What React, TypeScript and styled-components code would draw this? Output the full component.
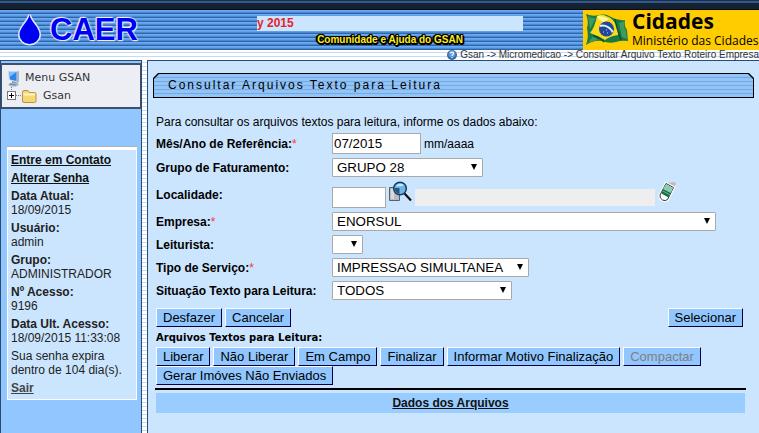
import React from "react";
import styled, { createGlobalStyle, css } from "styled-components";

const c = {
  panel: "#cbe5fe",
  side: "#91c6fe",
  line: "#2c4a70",
  ink: "#000",
};

const GlobalStyle = createGlobalStyle`
  * { box-sizing: border-box; }
  body {
    margin: 0;
    overflow-x: hidden;
    font-family: "Liberation Sans", Arial, sans-serif;
    font-size: 12px;
    line-height: 14px;
    color: ${c.ink};
    background: #fff;
  }
  button, input, select { font-family: inherit; margin: 0; }
`;

const pinstripe = css`
  background: repeating-linear-gradient(#fff 0 2px, #c3dcf5 2px 3px, #fff 3px 4px);
`;

const Page = styled.div`
  display: flex;
  flex-direction: column;
  min-height: 100vh;
`;

const TopStrip = styled.div`
  height: 10px;
  background: linear-gradient(#17304f 0 1px, #36598c 1px 3px, #142131 3px 9px, #05080d 9px);
`;

const Banner = styled.header`
  display: flex;
  height: 40px;
  background: repeating-linear-gradient(#6aabf6 0 1px, #5fa0ec 1px 2px, #4a87cf 2px 3px, #3263a3 3px 4px);
`;

const Logo = styled.div`
  display: flex;
  align-items: center;
  gap: 8px;
  flex: 0 0 257px;
  padding-left: 18px;
  font-size: 31px;
  line-height: 40px;
  font-weight: bold;
  color: #0000f5;
  text-shadow: 0 0 2px #fff, 0 0 2px #fff, 1px 1px 1px #e6edff, -1px -1px 1px #e6edff;
`;

const BannerCenter = styled.div`
  display: flex;
  flex-direction: column;
  align-items: center;
  flex: 1;
  min-width: 0;
  padding: 6px 60px 0 0;
`;

const Ticker = styled.div`
  align-self: stretch;
  height: 15px;
  overflow: hidden;
  white-space: nowrap;
  background: ${c.panel};
  color: #e8202c;
  font-size: 12px;
  line-height: 15px;
  font-weight: bold;
`;

const Community = styled.a`
  padding-top: 2px;
  font-size: 10px;
  font-weight: bold;
  color: #ffee1c;
  text-decoration: none;
  white-space: nowrap;
  text-shadow: 1px 0 #000, -1px 0 #000, 0 1px #000, 0 -1px #000, 1px 1px #000,
    -1px -1px #000, 1px -1px #000, -1px 1px #000, 2px 1px #000, 1px 2px #000, -2px 0 #000, 0 2px #000;
`;

const Ministry = styled.div`
  display: flex;
  align-items: center;
  gap: 4px;
  flex: 0 0 176px;
  padding-left: 2px;
  background: #fc0;
  font-family: "Open Sans", "Noto Sans", sans-serif;
  white-space: nowrap;
`;

const MinistryName = styled.div`
  display: flex;
  flex-direction: column;
  font-size: 12px;
  line-height: 17px;
  strong { font-size: 21px; line-height: 21px; font-weight: 700; }
`;

const Crumbs = styled.nav`
  ${pinstripe}
  display: flex;
  justify-content: flex-end;
  align-items: center;
  gap: 3px;
  height: 10px;
  font-size: 10px;
  line-height: 10px;
  color: #333;
  white-space: nowrap;
`;

const Body = styled.div`
  ${pinstripe}
  display: flex;
  flex: 1;
`;

const Sidebar = styled.aside`
  flex: 0 0 142px;
  margin-right: 5px;
  padding-top: 2px;
  border: 1px solid ${c.line};
  border-bottom: 0;
  background: ${c.side};
`;

const Menu = styled.div`
  height: 46px;
  padding: 4px 0 0 5px;
  border: 2px solid #3a5173;
  border-left-width: 1px;
  border-right-width: 1px;
  background: #eceef4;
  font-family: "DejaVu Sans", Verdana, sans-serif;
  font-size: 11px;
  color: #333;
`;

const MenuRow = styled.div`
  display: flex;
  align-items: center;
  gap: 5px;
  height: 18px;
`;

const Session = styled.section`
  margin: 38px 4px 0 6px;
  padding: 3px 3px 4px;
  border: 1px solid #fff;
  border-top: 3px solid #fff;
  box-shadow: 0 -1px #a9b3bf;
  background: ${c.panel};
  color: #222;
  display: flex;
  flex-direction: column;
  gap: 4px;
  white-space: nowrap;
`;

const SideLink = styled.a<{ $muted?: boolean }>`
  font-weight: bold;
  color: ${(p) => (p.$muted ? "#444" : "#111")};
`;

const Main = styled.main`
  flex: 1;
  min-width: 0;
  padding: 12px 5px 0;
  border: solid ${c.line};
  border-width: 1px 0 0 1px;
  background: ${c.panel};
`;

const bevel = css`
  clip-path: polygon(5px 0, calc(100% - 5px) 0, 100% 5px, 100% 100%, 0 100%, 0 5px);
`;

const TitleFrame = styled.div`
  ${bevel}
  padding: 1px;
  background: #000;
`;

const Title = styled.h1`
  ${bevel}
  margin: 0;
  padding-left: 14px;
  background: repeating-linear-gradient(#91c4f8 0 3px, #79a9dc 3px 4px);
  font-size: 12px;
  line-height: 23px;
  font-weight: normal;
  letter-spacing: 2px;
`;

const Content = styled.form`
  padding: 17px 8px 0 3px;
`;

const Intro = styled.p`
  margin: 0 0 2px;
`;

const Row = styled.div<{ $h?: number }>`
  display: grid;
  grid-template-columns: 176px 1fr;
  align-items: center;
  min-height: ${(p) => p.$h ?? 23}px;
`;

const Label = styled.label`
  font-weight: bold;
  white-space: nowrap;
`;

const Required = styled.span`
  color: #f33;
  font-weight: normal;
`;

const Fields = styled.div`
  display: flex;
  align-items: center;
  gap: 3px;
`;

const TextBox = styled.input<{ $w: number }>`
  width: ${(p) => p.$w}px;
  height: 21px;
  padding: 1px;
  border: 1px solid #a9a9a9;
  background: #fff;
  color: #000;
`;

const LookupFields = styled(Fields)`
  align-self: end;
  align-items: flex-end;
  padding-bottom: 2px;
`;

const ReadOnlyBox = styled.input`
  width: 240px;
  height: 17px;
  margin-bottom: 2px;
  padding: 0;
  border: 0;
  background: #eee;
`;

const IconButton = styled.button`
  display: flex;
  padding: 0 0 5px;
  border: 0;
  background: none;
`;

const SelectWrap = styled.div<{ $w: number }>`
  position: relative;
  width: ${(p) => p.$w}px;
  height: 19px;
  &::after {
    content: "";
    position: absolute;
    right: 6px;
    top: 6px;
    border: solid transparent;
    border-width: 6px 3px 0;
    border-top-color: #000;
    pointer-events: none;
  }
`;

const SelectBox = styled.select`
  appearance: none;
  display: block;
  width: 100%;
  height: 19px;
  padding: 0 4px;
  border: 1px solid #a9a9a9;
  border-radius: 1px;
  background: #fff;
  color: #000;
`;

const Actions = styled.div`
  display: flex;
  justify-content: space-between;
  padding: 6px 3px 4px 0;
`;

const ButtonRow = styled.div`
  display: flex;
  flex-wrap: wrap;
  column-gap: 3px;
`;

const Button = styled.button`
  height: 19px;
  padding: 0 6px;
  border: 1px solid;
  border-color: #fff #000040 #000040 #fff;
  background: ${c.side};
  color: #000;
  font-size: 13px;
  line-height: 15px;
  white-space: nowrap;
  &:disabled { color: #808080; }
`;

const Caption = styled.h2`
  margin: 0 0 3px;
  font-family: "DejaVu Sans", Verdana, sans-serif;
  font-size: 10px;
  line-height: 13px;
  font-weight: bold;
`;

const Results = styled.div`
  margin: 3px 0 0 -1px;
  padding: 3px 1px 0;
  border-top: 2px solid #000;
`;

const ResultsHead = styled.div`
  background: #99ccff;
  line-height: 20px;
  text-align: center;
  font-weight: bold;
  a { color: #111; }
`;

function Drop() {
  return (
    <svg width="24" height="36" viewBox="0 0 24 36" aria-hidden="true">
      <path d="M11.500 2.500C11 9 1.500 15 1.500 22.500a10 9.500 0 0 0 20 0C21.500 15 12 9 11.500 2.500Z" fill="#0000f5" stroke="#dfe9ff" strokeWidth="3" paintOrder="stroke" />
    </svg>
  );
}

function Flag() {
  return (
    <svg width="43" height="34" viewBox="0 0 43 34" aria-hidden="true">
      <path d="M1 1Q8 4 14 2Q20 0 26 4Q33 8 40 7Q39 13 42 17L43 28Q37 27 31 29Q24 31 17 28Q9 27 1 32Q4 24 2 15Q4 9 1 1Z" fill="#187a45" />
      <path d="M3 3Q8 6 11 5L5 16ZM34 10L40 8Q38 14 41 18L42 26L37 24ZM3 30L8 23L13 27Z" fill="#3f9a5c" />
      <path d="M12 3Q17 0 21 3Q29 5 33 16Q34 19 33 22Q25 23 20 27Q14 23 5 20Q10 14 12 3Z" fill="#fbd91b" />
      <path d="M12 3Q19 3 24 6L19 9Q14 8 12 3Z" fill="#fff6a0" />
      <ellipse cx="21.500" cy="16" rx="7.500" ry="7.500" fill="#204896" />
      <path d="M15 13Q22 11 28 19" fill="none" stroke="#e6eff9" strokeWidth="2" />
      <path d="M18 19h1m3 1h1m3-1h1m-6-2h1" stroke="#b8d1ff" />
      <path d="M30 6Q31 13 36 27M8 23Q15 24 19 29" fill="none" stroke="#0d4d31" strokeWidth="1.500" />
    </svg>
  );
}

function HelpIcon() {
  return (
    <svg width="10" height="10" viewBox="0 0 10 10" aria-hidden="true">
      <circle cx="5" cy="5" r="5" fill="#3469ad" />
      <circle cx="5" cy="4" r="3.500" fill="#6298d8" />
      <path d="M3.500 3.500Q3.600 2.200 5 2.200Q6.500 2.200 6.500 3.500Q6.500 4.300 5.500 4.900Q5 5.200 5 6M5 7v1" fill="none" stroke="#fff" strokeWidth="1.200" />
    </svg>
  );
}

function ComputerIcon() {
  return (
    <svg width="13" height="17" viewBox="0 0 13 17" aria-hidden="true">
      <path d="M8 2l4-1v11l-3 2Z" fill="#a8b6ca" />
      <path d="M1 1l9 0 0 11-8-2Z" fill="#c3d6ee" />
      <path d="M2 2l7.500 0v9L3 9.500Z" fill="#2d86e3" />
      <path d="M2 2l7.500 0-7 5Z" fill="#76c0ff" />
      <path d="M5 11l4 1v2H5Z" fill="#8294ae" />
      <ellipse cx="6.500" cy="14.500" rx="5" ry="2" fill="#a7b4c8" />
      <path d="M3 14l6 1" stroke="#7386a5" />
    </svg>
  );
}

function TreeFolder() {
  return (
    <svg width="31" height="18" viewBox="0 0 31 18" aria-hidden="true">
      <path d="M4.500 0v4M9 8.500h6" stroke="#777" strokeDasharray="1 1" />
      <rect x="0.500" y="4.500" width="8" height="8" fill="#fff" stroke="#777" />
      <path d="M2 8.500h5M4.500 6v5" stroke="#000" />
      <path d="M15.500 5.500q0-2 1.500-2h4l1.500 2h5q1.500 0 1.500 1.500v7q0 1.500-1.500 1.500h-10.500q-1.500 0-1.500-1.500Z" fill="#f6d873" stroke="#b69345" />
      <path d="M16.500 7.500h11.500" stroke="#fff4be" strokeWidth="2" />
    </svg>
  );
}

function SearchIcon() {
  return (
    <svg width="23" height="22" viewBox="0 0 23 22" aria-hidden="true">
      <path d="M.500 6.500h10v13H.500Z" fill="#b8bcc2" stroke="#5b6068" />
      <path d="M2 8h3v10H2Z" fill="#d7d9dc" />
      <circle cx="11" cy="7.500" r="6.300" fill="#6fb5e6" stroke="#193b5c" strokeWidth="1.500" />
      <path d="M5.500 7h5v6Q6 12 5.500 7Z" fill="#24587f" />
      <path d="M7 5Q10 1 15 4Q13 6 7 5Z" fill="#c4e8ff" />
      <path d="M15.500 12.500l6.500 7" stroke="#111" strokeWidth="2.200" />
    </svg>
  );
}

function EraserIcon() {
  return (
    <svg width="19" height="22" viewBox="0 0 19 22" aria-hidden="true">
      <path d="M8 2l9-1 1 2-3 5Z" fill="#bcbcbc" />
      <path d="M8 2.500l7.500 4-6 12q-2 2-5 .500-3-1.500-2.500-5Z" fill="#fff" stroke="#fff" strokeWidth="3" />
      <path d="M8 2.500l7.500 4-6 12q-2 2-5 .500-3-1.500-2.500-5Z" fill="#fff" stroke="#333" />
      <path d="M8 3l7 4-2 5-8-4Z" fill="#8bcdb0" />
      <path d="M5 8l8 4-2.500 4.500-7-4Z" fill="#17704b" />
      <path d="M5 10l7 4" stroke="#65b891" />
    </svg>
  );
}

function Mark() {
  return <Required>*</Required>;
}

function Select({ id, width, value }: { id: string; width: number; value: string }) {
  return (
    <SelectWrap $w={width}>
      <SelectBox id={id} defaultValue={value}>
        <option value={value}>{value}</option>
      </SelectBox>
    </SelectWrap>
  );
}

const session = [
  ["Data Atual:", "18/09/2015"],
  ["Usuário:", "admin"],
  ["Grupo:", "ADMINISTRADOR"],
  ["Nº Acesso:", "9196"],
  ["Data Ult. Acesso:", "18/09/2015 11:33:08"],
];

const fileActions = ["Liberar", "Não Liberar", "Em Campo", "Finalizar", "Informar Motivo Finalização"];

export default function App() {
  return (
    <Page>
      <GlobalStyle />
      <TopStrip />
      <Banner>
        <Logo><Drop />CAER</Logo>
        <BannerCenter>
          <Ticker>y 2015</Ticker>
          <Community href="#">Comunidade e Ajuda do GSAN</Community>
        </BannerCenter>
        <Ministry>
          <Flag />
          <MinistryName><strong>Cidades</strong><span>Ministério das Cidades</span></MinistryName>
        </Ministry>
      </Banner>
      <Crumbs>
        <HelpIcon />
        <span>Gsan -&gt; Micromedicao -&gt; Consultar Arquivo Texto Roteiro Empresa</span>
      </Crumbs>
      <Body>
        <Sidebar>
          <Menu>
            <MenuRow><ComputerIcon />Menu GSAN</MenuRow>
            <MenuRow><TreeFolder />Gsan</MenuRow>
          </Menu>
          <Session>
            <SideLink href="#">Entre em Contato</SideLink>
            <SideLink href="#">Alterar Senha</SideLink>
            {session.map(([name, value]) => (
              <div key={name}><b>{name}</b><br />{value}</div>
            ))}
            <div>Sua senha expira<br />dentro de 104 dia(s).</div>
            <SideLink href="#" $muted>Sair</SideLink>
          </Session>
        </Sidebar>
        <Main>
          <TitleFrame><Title>Consultar Arquivos Texto para Leitura</Title></TitleFrame>
          <Content onSubmit={(e) => e.preventDefault()}>
            <Intro>Para consultar os arquivos textos para leitura, informe os dados abaixo:</Intro>
            <Row $h={25}>
              <Label htmlFor="mes">Mês/Ano de Referência:<Mark /></Label>
              <Fields><TextBox id="mes" $w={89} defaultValue="07/2015" /><span>mm/aaaa</span></Fields>
            </Row>
            <Row>
              <Label htmlFor="grupo">Grupo de Faturamento:</Label>
              <Select id="grupo" width={151} value="GRUPO 28" />
            </Row>
            <Row $h={31}>
              <Label htmlFor="localidade">Localidade:</Label>
              <LookupFields>
                <TextBox id="localidade" $w={54} />
                <IconButton type="button" aria-label="Pesquisar localidade"><SearchIcon /></IconButton>
                <ReadOnlyBox readOnly aria-label="Nome da localidade" />
                <IconButton type="button" aria-label="Limpar localidade"><EraserIcon /></IconButton>
              </LookupFields>
            </Row>
            <Row>
              <Label htmlFor="empresa">Empresa:<Mark /></Label>
              <Select id="empresa" width={384} value="ENORSUL" />
            </Row>
            <Row>
              <Label htmlFor="leiturista">Leiturista:</Label>
              <Select id="leiturista" width={31} value="" />
            </Row>
            <Row>
              <Label htmlFor="servico">Tipo de Serviço:<Mark /></Label>
              <Select id="servico" width={197} value="IMPRESSAO SIMULTANEA" />
            </Row>
            <Row>
              <Label htmlFor="situacao">Situação Texto para Leitura:</Label>
              <Select id="situacao" width={180} value="TODOS" />
            </Row>
            <Actions>
              <ButtonRow>
                <Button type="button">Desfazer</Button>
                <Button type="button">Cancelar</Button>
              </ButtonRow>
              <Button type="submit">Selecionar</Button>
            </Actions>
            <Caption>Arquivos Textos para Leitura:</Caption>
            <ButtonRow>
              {fileActions.map((name) => <Button type="button" key={name}>{name}</Button>)}
              <Button type="button" disabled>Compactar</Button>
              <Button type="button">Gerar Imóves Não Enviados</Button>
            </ButtonRow>
            <Results>
              <ResultsHead><a href="#">Dados dos Arquivos</a></ResultsHead>
            </Results>
          </Content>
        </Main>
      </Body>
    </Page>
  );
}
